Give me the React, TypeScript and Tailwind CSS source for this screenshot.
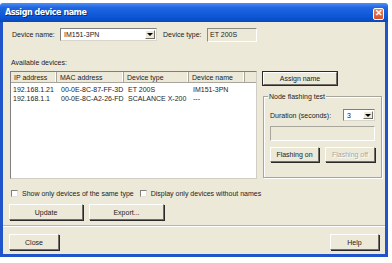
import { useState } from "react";

const devices = [
  { ip: "192.168.1.21", mac: "00-0E-8C-87-FF-3D", type: "ET 200S", name: "IM151-3PN" },
  { ip: "192.168.1.1", mac: "00-0E-8C-A2-26-FD", type: "SCALANCE X-200", name: "---" },
];

function Btn({ label, className, disabled, isDefault }: { label: string; className?: string; disabled?: boolean; isDefault?: boolean }) {
  return (
    <button
      className={
        "flex items-center justify-center bg-[#ece9d8] border border-t-white border-l-white border-r-[#6f6e69] border-b-[#6f6e69] shadow-[1px_1px_0_#2a2a2a] " +
        (isDefault ? "outline outline-1 outline-[#2a2a2a] " : "") +
        (disabled ? "text-[#a9a79c] [text-shadow:1px_1px_0_#fff] " : "text-[#1c1c1c] ") +
        (className ?? "")
      }
    >
      {label}
    </button>
  );
}

function Combo({ value, className }: { value: string; className?: string }) {
  return (
    <div className={"flex items-stretch bg-white border border-t-[#7f7f7f] border-l-[#7f7f7f] border-r-[#d8d6cc] border-b-[#d8d6cc] " + (className ?? "")}>
      <div className="flex-1 pl-[3px] flex items-center">{value}</div>
      <div className="w-[10px] my-[1px] mr-[1px] bg-[#ece9d8] border border-t-white border-l-white border-r-[#6f6e69] border-b-[#6f6e69] flex items-center justify-center">
        <span className="w-0 h-0 border-l-[3px] border-r-[3px] border-t-[3px] border-l-transparent border-r-transparent border-t-black" />
      </div>
    </div>
  );
}

function Check({ label }: { label: string }) {
  const [on, setOn] = useState(false);
  return (
    <label className="flex items-center gap-[4px]" onClick={() => setOn(!on)}>
      <span className="w-[7px] h-[7px] bg-white border border-t-[#7f7f7f] border-l-[#7f7f7f] border-r-[#e4e2d8] border-b-[#e4e2d8] text-[6px] leading-none">
        {on ? "✓" : ""}
      </span>
      {label}
    </label>
  );
}

export default function App() {
  return (
    <div className="w-[392px] h-[263px] bg-white pt-[3px] font-['Liberation_Sans',Arial,sans-serif] text-[7px] text-[#1c1c1c] leading-none whitespace-nowrap">
      <div className="w-[388px] flex flex-col">
        {/* title bar */}
        <div className="h-[19px] rounded-t-[3px] bg-[linear-gradient(#4a8ef4,#2065e0_25%,#0c58d8_70%,#0a48ba)] flex items-center justify-between pl-[5px] pr-[4px]">
          <span className="text-white font-bold text-[8px] font-['DejaVu_Sans',sans-serif] tracking-[-0.45px] [text-shadow:1px_1px_0_#0a2a78]">
            Assign device name
          </span>
          <div className="w-[11px] h-[12px] mt-[2px] rounded-[2px] border border-white bg-[linear-gradient(#e8855e,#d4502b)] flex items-center justify-center text-white text-[9px] font-bold">
            ✕
          </div>
        </div>

        {/* body */}
        <div className="h-[235px] bg-[#ece9d8] border-x-[3px] border-b-[3px] border-[#1f55c9] pl-[6px] pr-[3px] flex flex-col">
          <div className="mt-[6px] h-[13px] flex items-center">
            <span className="w-[51px] pl-[3px]">Device name:</span>
            <Combo value="IM151-3PN" className="w-[97px] h-[13px]" />
            <span className="ml-[6px] w-[44px]">Device type:</span>
            <div className="w-[50px] h-[14px] pl-[2px] flex items-center bg-[#ece9d8] border border-t-[#8a8982] border-l-[#8a8982] border-r-white border-b-white">
              ET 200S
            </div>
          </div>

          <div className="mt-[18px] pl-[2px]">Available devices:</div>

          <div className="mt-[5px] flex gap-[6px]">
            {/* device list */}
            <div className="ml-[1px] w-[247px] h-[108px] bg-white border border-t-[#7f7f7f] border-l-[#7f7f7f] border-r-[#d0cec4] border-b-[#d0cec4]">
              <div className="h-[11px] flex bg-[#ece9d8] border-b border-[#a8a69c]">
                {[
                  ["IP address", "w-[46px]"],
                  ["MAC address", "w-[67px]"],
                  ["Device type", "w-[65px]"],
                  ["Device name", "w-[56px]"],
                ].map(([h, w]) => (
                  <div key={h} className={w + " flex items-center pl-[3px] border-r border-r-[#a8a69c] shadow-[inset_-1px_0_0_#fff]"}>
                    {h}
                  </div>
                ))}
              </div>
              <div className="pt-[2px]">
                {devices.map((d) => (
                  <div key={d.ip} className="h-[9px] flex items-center">
                    <span className="w-[46px] pl-[2px]">{d.ip}</span>
                    <span className="w-[67px] pl-[4px]">{d.mac}</span>
                    <span className="w-[65px] pl-[4px]">{d.type}</span>
                    <span className="pl-[4px]">{d.name}</span>
                  </div>
                ))}
              </div>
            </div>

            {/* right column */}
            <div className="w-[119px] flex flex-col">
              <Btn label="Assign name" isDefault className="w-[74px] h-[13px] mt-[1px]" />
              <div className="mt-[11px] h-[82px] border border-[#a8a69c] shadow-[inset_1px_1px_0_#fff,1px_1px_0_#fff] relative px-[6px] flex flex-col">
                <span className="absolute -top-[4px] left-[4px] bg-[#ece9d8] px-[1px]">Node flashing test</span>
                <div className="mt-[12px] flex items-center justify-between">
                  <span>Duration (seconds):</span>
                  <Combo value="3" className="w-[32px] h-[12px]" />
                </div>
                <div className="mt-[5px] h-[15px] border border-t-[#a8a69c] border-l-[#a8a69c] border-r-white border-b-white" />
                <div className="mt-[6px] flex justify-between">
                  <Btn label="Flashing on" className="w-[49px] h-[15px]" />
                  <Btn label="Flashing off" disabled className="w-[50px] h-[15px]" />
                </div>
              </div>
            </div>
          </div>

          <div className="mt-[11px] flex items-center gap-[6px] pl-[2px]">
            <Check label="Show only devices of the same type" />
            <Check label="Display only devices without names" />
          </div>

          <div className="mt-[7px] flex gap-[6px]">
            <Btn label="Update" className="w-[74px] h-[16px]" />
            <Btn label="Export..." className="w-[75px] h-[16px]" />
          </div>

          <div className="mt-[5px] -ml-[6px] -mr-[3px] h-[2px] border-t border-t-[#b9b7ab] border-b border-b-white" />

          <div className="mt-[7px] flex justify-between pr-[3px]">
            <Btn label="Close" className="w-[50px] h-[16px]" />
            <Btn label="Help" className="w-[49px] h-[16px]" />
          </div>
        </div>
      </div>
    </div>
  );
}
